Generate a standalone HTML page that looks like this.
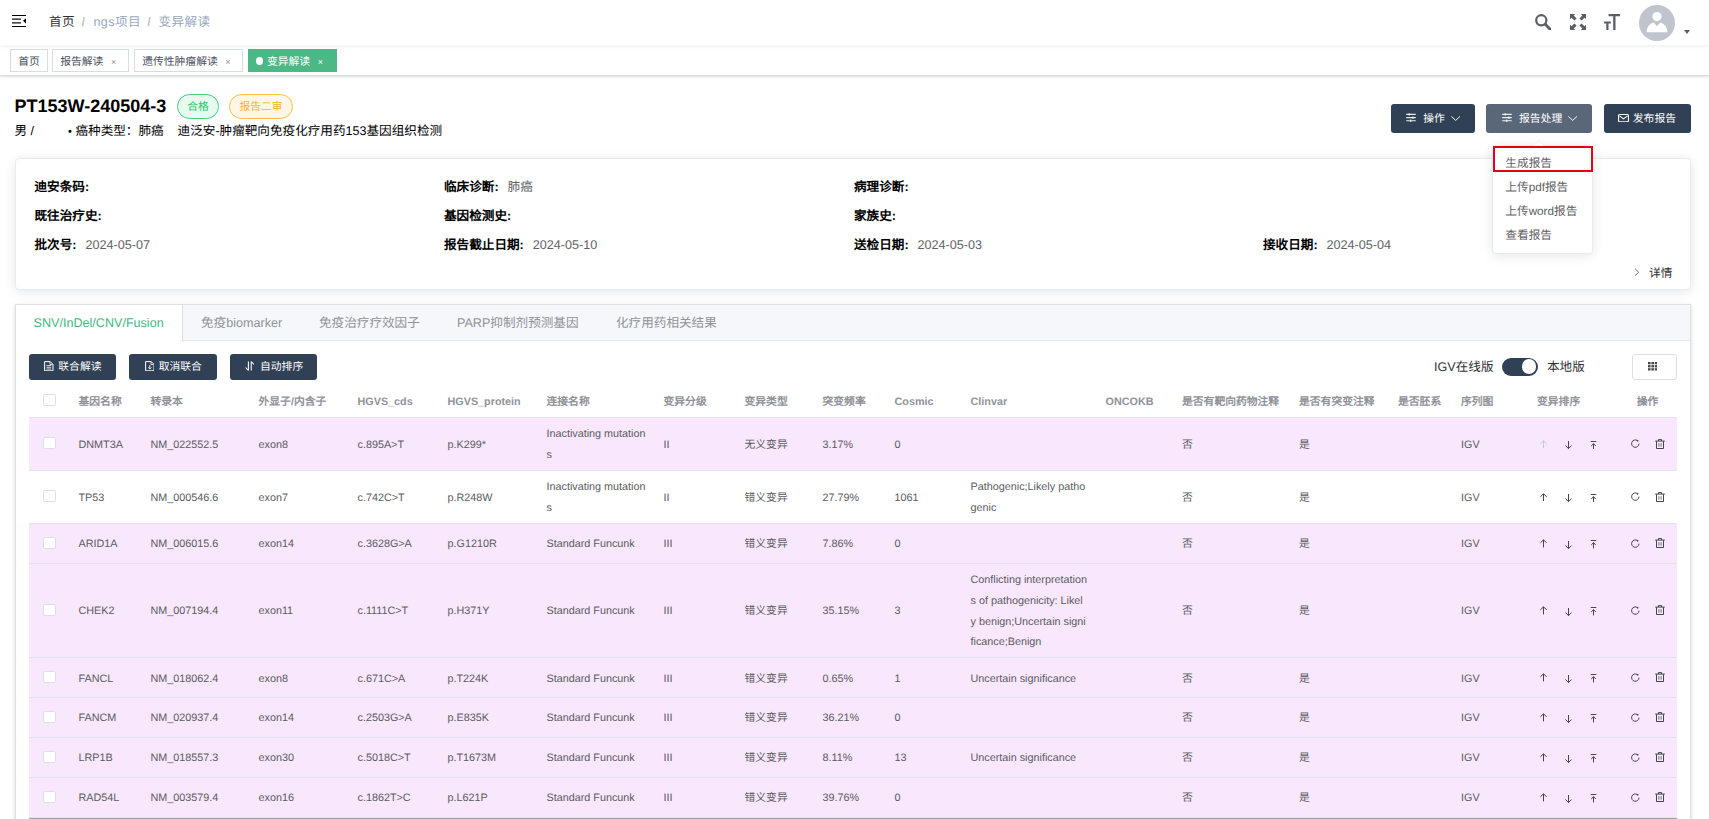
<!DOCTYPE html>
<html lang="zh-CN">
<head>
<meta charset="utf-8">
<title>变异解读</title>
<style>
*{box-sizing:border-box}
html,body{margin:0;padding:0}
body{width:1709px;height:819px;overflow:hidden;background:#fff;position:relative;
 font-family:"Liberation Sans",sans-serif;font-size:12.6px;color:#303133;text-rendering:geometricPrecision}
svg{display:block}
/* ---------- navbar ---------- */
.navbar{position:absolute;left:0;top:0;width:1709px;height:45px;background:#fff;box-shadow:0 1px 4px rgba(0,21,41,.08);z-index:5}
.hamb{position:absolute;left:12px;top:14px;width:14px;height:14px}
.crumb{position:absolute;left:49px;top:0;height:44px;line-height:44.200px;font-size:12.6px;white-space:nowrap;color:#97a8be}
.crumb b{font-weight:400;color:#303133}
.crumb i{font-style:normal;color:#c0c4cc;font-weight:700}
.crumb b,.crumb i,.crumb span{position:absolute;top:0;letter-spacing:.4px}
.nico{position:absolute;top:14px;width:16px;height:16px;color:#5a5e66}
.avatar{position:absolute;left:1639px;top:5px;width:36px;height:36px;border-radius:50%;background:#c0c4cc;overflow:hidden}
.caret{position:absolute;left:1684px;top:30.300px;width:0;height:0;border-left:3.800px solid transparent;border-right:3.800px solid transparent;border-top:4.800px solid #5a5e66}
/* ---------- tags view ---------- */
.tags{position:absolute;left:0;top:45px;width:1709px;height:30.6px;background:#fff;border-bottom:1px solid #d8dce5;box-shadow:0 1px 3px 0 rgba(0,0,0,.12),0 0 3px 0 rgba(0,0,0,.04)}
.tag{position:absolute;top:3.6px;height:23.4px;line-height:25.400px;border:1px solid #d8dce5;background:#fff;color:#495060;font-size:10.8px;padding:0 7.2px;white-space:nowrap}
.tag .x{display:inline-block;margin-left:7.500px;font-size:9px;color:#8d939e;transform:translateY(-0.100px)}
.tag.on{background:#4bb886;border-color:#4bb886;color:#fff}
.tag.on .x{color:#fff}
.tag.on:before{content:"";display:inline-block;width:7.2px;height:7.600px;border-radius:50%;background:#fff;margin-right:3.6px;position:relative;top:0.300px}
/* ---------- title ---------- */
.ttl{position:absolute;left:14.5px;top:94px;height:24px;line-height:24px;font-size:18px;font-weight:700;color:#000;white-space:nowrap}
.pill{position:absolute;top:93.5px;height:25.2px;line-height:25px;border-radius:13px;border:1px solid;font-size:10.8px;padding:0;text-align:center;white-space:nowrap}
.pill.g{left:177px;width:42px;color:#22c96c;background:#e8f9ef;border-color:#3dd280}
.pill.o{left:229px;width:64px;color:#f9b52a;background:#fff7e6;border-color:#fbbf45}
.sub{position:absolute;left:14.5px;top:121px;height:20px;line-height:20px;font-size:12.6px;color:#000;white-space:pre}
.btn{position:absolute;background:#304156;color:#fff;border-radius:3px;font-size:10.8px;font-weight:500;white-space:nowrap}
.btn .a{position:absolute}
.btn span.a{top:0;height:100%;display:flex;align-items:center}
/* ---------- dropdown ---------- */
.dd{position:absolute;left:1491.500px;top:144.700px;width:101.800px;height:109px;background:#fff;border:1px solid #e6ebf5;border-radius:4px;box-shadow:0 2px 12px 0 rgba(0,0,0,.1);z-index:20}
.dd div{position:absolute;left:12.800px;font-size:11.7px;color:#606266;height:24.3px;line-height:24.3px;white-space:nowrap}
.ddarrow{position:absolute;left:1533.800px;top:140.600px;width:0;height:0;border-left:5px solid transparent;border-right:5px solid transparent;border-bottom:5px solid #fff;z-index:21;filter:drop-shadow(0 -1px 0 #e6ebf5)}
.redbox{position:absolute;left:1493px;top:146px;width:100px;height:25.5px;border:2px solid #e60012;z-index:22}
/* ---------- info card ---------- */
.card{position:absolute;left:15px;top:158px;width:1676px;height:132px;background:#fff;border:1px solid #e6ebf5;border-radius:4px;box-shadow:0 2px 12px 0 rgba(0,0,0,.1)}
.f{position:absolute;height:28.8px;line-height:28.8px;white-space:nowrap;font-size:12.6px;color:#606266}
.f b{color:#000;font-weight:700;margin-right:9px}
/* ---------- tab card ---------- */
.tcard{position:absolute;left:15px;top:304px;width:1676px;height:560px;background:#fff;border:1px solid #dcdfe6;box-shadow:0 2px 4px 0 rgba(0,0,0,.12),0 0 6px 0 rgba(0,0,0,.04)}
.thead{position:absolute;left:0;top:0;width:1674px;height:36px;background:#f5f7fa;border-bottom:1px solid #e4e7ed}
.tb{position:absolute;top:0;height:36px;line-height:37px;font-size:12.6px;color:#909399;white-space:nowrap}
.tb.on{left:0;top:0;width:167px;height:37px;line-height:37px;background:#fff;color:#42b983;border-right:1px solid #dcdfe6;text-align:left;padding-left:17.500px}
.sw{position:absolute;left:1502px;top:357.5px;width:36px;height:18px;border-radius:9px;background:#304156}
.sw:after{content:"";position:absolute;right:1.8px;top:1.8px;width:14.4px;height:14.4px;border-radius:50%;background:#fff}
.lbl{position:absolute;height:18px;line-height:18px;font-size:12.6px;color:#303133;white-space:nowrap}
.gbtn{position:absolute;left:1632px;top:354px;width:45px;height:26px;border:1px solid #dcdfe6;border-radius:3px;background:#fff}
/* ---------- table ---------- */
table{position:absolute;left:29px;top:385px;width:1648px;border-collapse:separate;border-spacing:0;table-layout:fixed;font-size:10.8px;color:#5a5c61}
th,td{padding:0 9px;text-align:left;vertical-align:middle;white-space:nowrap;overflow:visible;border-bottom:1px solid #dfe4ed;line-height:20.7px;font-weight:400}
th{height:33px;color:#909399;font-weight:700;border-bottom:1px solid #dfe4ed;padding-top:2.200px}
th .cb{position:relative;top:-2px}
th.ctr{text-align:center}
td{padding-top:1px}
tr.pink td{background:#f9e7fd}
td .cb{position:relative;top:-1.500px}
th.sel,td.sel{padding-left:13.800px;padding-right:0}
.cb{display:block;width:13px;height:12px;border:1px solid #dcdfe6;border-radius:2px;background:#fff}
.ic{width:10.8px;height:10.8px}
td.srt,td.ops{padding:0}
.dn{position:relative;top:1px}
.w{position:relative;height:20.700px}
.ab,.ab2{position:absolute;color:#3a3c42}
.ab.dis{color:#c3c6d8}
</style>
</head>
<body>

<!-- NAVBAR -->
<div class="navbar">
  <svg class="hamb" viewBox="0 0 14 14"><path d="M0 1.500h14M0 12.500h14" stroke="#000" stroke-width="1.200" fill="none"/><path d="M0 5.100h9M0 8.800h9" stroke="#111" stroke-width="1.300" fill="none"/><path d="M14 4.200v5.300L11 6.850z" fill="#000"/></svg>
  <div class="crumb"><b style="left:0">首页</b><i style="left:32.600px">/</i><span style="left:44.400px">ngs项目</span><i style="left:98.200px">/</i><span style="left:109.500px">变异解读</span></div>
  <svg class="nico" style="left:1535px" viewBox="0 0 16 16"><circle cx="6.300" cy="6.300" r="5.100" fill="none" stroke="currentColor" stroke-width="2.200"/><path d="M10.300 10.300L14.900 14.900" stroke="currentColor" stroke-width="2.800" stroke-linecap="round"/></svg>
  <svg class="nico" style="left:1570px" viewBox="0 0 16 16"><g fill="currentColor"><path d="M0 0h5.200L3.700 1.500l2.900 2.900-2.200 2.200-2.900-2.900L0 5.200z"/><path d="M16 0v5.200l-1.500-1.500-2.900 2.900-2.200-2.200 2.900-2.900L10.800 0z"/><path d="M0 16v-5.200l1.500 1.500 2.900-2.900 2.200 2.200-2.900 2.900L5.200 16z"/><path d="M16 16h-5.200l1.500-1.500-2.900-2.900 2.200-2.200 2.900 2.900 1.500-1.500z"/></g></svg>
  <svg class="nico" style="left:1604px" viewBox="0 0 16 16"><g fill="currentColor"><path d="M4.6 0H16v2.2h-4.5V16H9.2V2.2H4.6z"/><path d="M0 7.6h6.8v2H4.5V16H2.3V9.6H0z"/></g></svg>
  <div class="avatar"><svg viewBox="0 0 36 36" width="36" height="36"><circle cx="18" cy="11.6" r="4.6" fill="#fff"/><path d="M7.6 27.2c0-5 3.2-8.6 7.2-9.6l3.2 3.6 3.2-3.6c4 1 7.2 4.600 7.200 9.600z" fill="#fff"/></svg></div>
  <div class="caret"></div>
</div>

<!-- TAGS -->
<div class="tags">
  <div class="tag" style="left:10px;width:38px">首页</div>
  <div class="tag" style="left:52px;width:77px">报告解读<span class="x">×</span></div>
  <div class="tag" style="left:134px;width:109px">遗传性肿瘤解读<span class="x">×</span></div>
  <div class="tag on" style="left:248px;width:89px">变异解读<span class="x">×</span></div>
</div>

<!-- TITLE -->
<div class="ttl">PT153W-240504-3</div>
<div class="pill g">合格</div>
<div class="pill o">报告二审</div>
<div class="sub">男 /        <span style="font-size:11px;position:relative;top:-0.500px;margin-left:6px">•</span> 癌种类型：肺癌    迪泛安-肿瘤靶向免疫化疗用药153基因组织检测</div>

<div class="btn" style="left:1391px;top:104px;width:84px;height:28.8px"><svg class="a" style="left:14.800px;top:9.300px" width="10" height="9.400" viewBox="0 0 10 9.400"><path d="M.2 1.400h9.600M.2 4.600h9.600M.2 7.800h9.600" stroke="#fff" stroke-width="1.150" opacity=".88"/><path d="M3.300.2v2.400M6.900 3.400v2.400M4.600 6.600v2.400" stroke="#fff" stroke-width="1.500" opacity=".7"/></svg><span class="a" style="left:32.200px">操作</span><svg class="a" style="left:60px;top:11.800px" width="9.400" height="5.400" viewBox="0 0 9.400 5.400"><path d="M.4.400L4.700 4.400 9 .4" stroke="#fff" stroke-width=".95" fill="none"/></svg></div>
<div class="btn" style="left:1486px;top:104px;width:106px;height:28.8px;background:#596778"><svg class="a" style="left:15.600px;top:9.300px" width="10" height="9.400" viewBox="0 0 10 9.400"><path d="M.2 1.400h9.600M.2 4.600h9.600M.2 7.800h9.600" stroke="#fff" stroke-width="1.150" opacity=".88"/><path d="M3.300.2v2.400M6.900 3.400v2.400M4.600 6.600v2.400" stroke="#fff" stroke-width="1.500" opacity=".7"/></svg><span class="a" style="left:33px">报告处理</span><svg class="a" style="left:82.300px;top:11.800px" width="9.400" height="5.400" viewBox="0 0 9.400 5.400"><path d="M.4.400L4.700 4.400 9 .4" stroke="#fff" stroke-width=".95" fill="none"/></svg></div>
<div class="btn" style="left:1604px;top:104px;width:87px;height:28.8px"><svg class="a" style="left:14px;top:9.800px" width="11" height="8.400" viewBox="0 0 11 8.400"><rect x=".55" y=".55" width="9.900" height="7.300" rx="1" fill="none" stroke="#fff" stroke-width="1.100"/><path d="M1.500 1.900l4 3 4-3" fill="none" stroke="#fff" stroke-width="1.100"/></svg><span class="a" style="left:28.800px">发布报告</span></div>

<!-- INFO CARD -->
<div class="card">
  <div class="f" style="left:18.5px;top:14px"><b>迪安条码:</b></div>
  <div class="f" style="left:18.5px;top:43px"><b>既往治疗史:</b></div>
  <div class="f" style="left:18.5px;top:71.800px"><b>批次号:</b>2024-05-07</div>
  <div class="f" style="left:428px;top:14px"><b>临床诊断:</b>肺癌</div>
  <div class="f" style="left:428px;top:43px"><b>基因检测史:</b></div>
  <div class="f" style="left:428px;top:71.800px"><b>报告截止日期:</b>2024-05-10</div>
  <div class="f" style="left:838px;top:14px"><b>病理诊断:</b></div>
  <div class="f" style="left:838px;top:43px"><b>家族史:</b></div>
  <div class="f" style="left:838px;top:71.800px"><b>送检日期:</b>2024-05-03</div>
  <div class="f" style="left:1247px;top:71.800px"><b>接收日期:</b>2024-05-04</div>
  <svg style="position:absolute;left:1618px;top:109px" width="6" height="8.400" viewBox="0 0 6 8.400"><path d="M.8.500L4.700 4.200.8 7.900" fill="none" stroke="#6b7280" stroke-width="1"/></svg>
  <div class="f" style="left:1633px;top:101px;color:#303133;font-size:11.7px">详情</div>
</div>

<!-- DROPDOWN -->
<div class="ddarrow"></div>
<div class="dd">
  <div style="top:6px">生成报告</div>
  <div style="top:30.800px">上传pdf报告</div>
  <div style="top:54.700px">上传word报告</div>
  <div style="top:78.400px">查看报告</div>
</div>
<div class="redbox"></div>

<!-- TAB CARD -->
<div class="tcard">
  <div class="thead">
    <div class="tb on">SNV/InDel/CNV/Fusion</div>
    <div class="tb" style="left:185px">免疫biomarker</div>
    <div class="tb" style="left:303px">免疫治疗疗效因子</div>
    <div class="tb" style="left:441px">PARP抑制剂预测基因</div>
    <div class="tb" style="left:600px">化疗用药相关结果</div>
  </div>
</div>

<div class="btn" style="left:29px;top:354px;width:87px;height:26px"><svg class="a" style="left:15.200px;top:6.500px" width="9.600" height="10.400" viewBox="0 0 9.600 10.400"><path d="M.6.600h5.600l2.800 2.800v6.400H.6z" fill="none" stroke="#fff" stroke-width="1"/><path d="M6 .8v2.800h2.800" fill="none" stroke="#fff" stroke-width=".8"/><path d="M2.400 4.600h4.800M2.400 6.300h4.800M2.400 8h4.800" stroke="#fff" stroke-width=".8"/></svg><span class="a" style="top:-1px;left:29.300px">联合解读</span></div>
<div class="btn" style="left:129px;top:354px;width:88px;height:26px"><svg class="a" style="left:15.800px;top:6.500px" width="9.600" height="10.400" viewBox="0 0 9.600 10.400"><path d="M.6.600h5.600l2.800 2.800v6.400H.6z" fill="none" stroke="#fff" stroke-width="1"/><path d="M6 .8v2.800h2.800" fill="none" stroke="#fff" stroke-width=".8"/><path d="M4.800 4v3.800M3.200 6.400l1.600 1.600 1.600-1.600" stroke="#fff" stroke-width=".9" fill="none"/></svg><span class="a" style="top:-1px;left:29.700px">取消联合</span></div>
<div class="btn" style="left:230px;top:354px;width:87px;height:26px"><svg class="a" style="left:14.800px;top:6.800px" width="9.600" height="10" viewBox="0 0 9.600 10"><path d="M3.400.500v9M.6 6.500l2.800 3M6.200 9.500v-9M9 3.500l-2.800-3" stroke="#fff" stroke-width="1.050" fill="none"/></svg><span class="a" style="top:-1px;left:30px">自动排序</span></div>

<div class="lbl" style="left:1434px;top:357.5px">IGV在线版</div>
<div class="sw"></div>
<div class="lbl" style="left:1547px;top:357.5px">本地版</div>
<div class="gbtn"><svg style="position:absolute;left:15px;top:7px" width="9.400" height="8.500" viewBox="0 0 9.400 8.500"><g fill="#44464c"><rect x="0" y="0" width="2.600" height="2.300"/><rect x="3.400" y="0" width="2.600" height="2.300"/><rect x="6.800" y="0" width="2.600" height="2.300"/><rect x="0" y="3.100" width="2.600" height="2.300"/><rect x="3.400" y="3.100" width="2.600" height="2.300"/><rect x="6.800" y="3.100" width="2.600" height="2.300"/><rect x="0" y="6.200" width="2.600" height="2.300"/><rect x="3.400" y="6.200" width="2.600" height="2.300"/><rect x="6.800" y="6.200" width="2.600" height="2.300"/></g></svg></div>

<table>
<colgroup><col style="width:40.5px"><col style="width:72px"><col style="width:108px"><col style="width:99px"><col style="width:90px"><col style="width:99px"><col style="width:117px"><col style="width:81px"><col style="width:78px"><col style="width:72px"><col style="width:76px"><col style="width:135px"><col style="width:76.5px"><col style="width:117px"><col style="width:99px"><col style="width:63px"><col style="width:76px"><col style="width:90px"><col style="width:59px"></colgroup>
<thead><tr><th class="sel"><span class="cb"></span></th><th>基因名称</th><th>转录本</th><th>外显子/内含子</th><th>HGVS_cds</th><th>HGVS_protein</th><th>连接名称</th><th>变异分级</th><th>变异类型</th><th>突变频率</th><th>Cosmic</th><th>Clinvar</th><th>ONCOKB</th><th>是否有靶向药物注释</th><th>是否有突变注释</th><th>是否胚系</th><th>序列图</th><th>变异排序</th><th class=ctr>操作</th></tr></thead>
<tbody>
<tr class="pink" style="height:53px"><td class="sel"><span class="cb"></span></td><td style="padding-top:2.800px">DNMT3A</td><td style="padding-top:2.800px">NM_022552.5</td><td style="padding-top:2.800px">exon8</td><td style="padding-top:2.800px">c.895A&gt;T</td><td style="padding-top:2.800px">p.K299*</td><td>Inactivating mutation<br>s</td><td style="padding-top:2.800px">II</td><td style="padding-top:2.800px">无义变异</td><td style="padding-top:2.800px">3.17%</td><td style="padding-top:2.800px">0</td><td style="padding-top:2.800px"></td><td style="padding-top:2.800px"></td><td style="padding-top:2.800px">否</td><td style="padding-top:2.800px">是</td><td style="padding-top:2.800px"></td><td style="padding-top:2.800px">IGV</td><td class="srt"><div class="w"><span class="ab dis" style="left:12px;top:6.200px"><svg width="7" height="8.4" viewBox="0 0 7 8.4"><path d="M3.5 8.4V.8M.4 3.900L3.500.8l3.100 3.100" fill="none" stroke="currentColor" stroke-width="0.95"/></svg></span><span class="ab" style="left:37px;top:7.600px"><svg width="7" height="8.4" viewBox="0 0 7 8.4"><path d="M3.500 0v7.600M.4 4.500l3.100 3.100 3.100-3.100" fill="none" stroke="currentColor" stroke-width="0.95"/></svg></span><span class="ab" style="left:62px;top:7.300px"><svg width="7" height="8.400" viewBox="0 0 7 8.400"><path d="M.7.500h5.600M3.500 8.400V2.700M1.200 5l2.300-2.300L5.800 5" fill="none" stroke="currentColor" stroke-width="0.95"/></svg></span></div></td><td class="ops"><div class="w"><span class="ab2" style="left:12.700px;top:5.800px"><svg width="9.200" height="8.600" viewBox="0 0 9.200 8.600"><path d="M8 4.700A3.700 3.700 0 1 1 6.300 1.500" fill="none" stroke="currentColor" stroke-width="0.95"/><path d="M6 .7L7.900 1.700 6.300 2.900z" fill="currentColor"/></svg></span><span class="ab2" style="left:37px;top:4.900px"><svg width="10" height="10" viewBox="0 0 10 10"><path d="M.2 2.100h9.600M3.400 2V.6h3.200V2M1.500 2.300v7.200h7V2.300" fill="none" stroke="currentColor" stroke-width="0.95"/><path d="M3.900 4.200v3.500M6.100 4.200v3.500" fill="none" stroke="currentColor" stroke-width=".7"/></svg></span></div></td></tr>
<tr class="" style="height:53px"><td class="sel"><span class="cb"></span></td><td style="padding-top:2.800px">TP53</td><td style="padding-top:2.800px">NM_000546.6</td><td style="padding-top:2.800px">exon7</td><td style="padding-top:2.800px">c.742C&gt;T</td><td style="padding-top:2.800px">p.R248W</td><td>Inactivating mutation<br>s</td><td style="padding-top:2.800px">II</td><td style="padding-top:2.800px">错义变异</td><td style="padding-top:2.800px">27.79%</td><td style="padding-top:2.800px">1061</td><td>Pathogenic;Likely patho<br>genic</td><td style="padding-top:2.800px"></td><td style="padding-top:2.800px">否</td><td style="padding-top:2.800px">是</td><td style="padding-top:2.800px"></td><td style="padding-top:2.800px">IGV</td><td class="srt"><div class="w"><span class="ab" style="left:12px;top:6.200px"><svg width="7" height="8.4" viewBox="0 0 7 8.4"><path d="M3.5 8.4V.8M.4 3.900L3.500.8l3.100 3.100" fill="none" stroke="currentColor" stroke-width="0.95"/></svg></span><span class="ab" style="left:37px;top:7.600px"><svg width="7" height="8.4" viewBox="0 0 7 8.4"><path d="M3.500 0v7.600M.4 4.500l3.100 3.100 3.100-3.100" fill="none" stroke="currentColor" stroke-width="0.95"/></svg></span><span class="ab" style="left:62px;top:7.300px"><svg width="7" height="8.400" viewBox="0 0 7 8.400"><path d="M.7.500h5.600M3.500 8.400V2.700M1.200 5l2.300-2.300L5.800 5" fill="none" stroke="currentColor" stroke-width="0.95"/></svg></span></div></td><td class="ops"><div class="w"><span class="ab2" style="left:12.700px;top:5.800px"><svg width="9.200" height="8.600" viewBox="0 0 9.200 8.600"><path d="M8 4.700A3.700 3.700 0 1 1 6.300 1.500" fill="none" stroke="currentColor" stroke-width="0.95"/><path d="M6 .7L7.900 1.700 6.300 2.900z" fill="currentColor"/></svg></span><span class="ab2" style="left:37px;top:4.900px"><svg width="10" height="10" viewBox="0 0 10 10"><path d="M.2 2.100h9.600M3.400 2V.6h3.200V2M1.500 2.300v7.200h7V2.300" fill="none" stroke="currentColor" stroke-width="0.95"/><path d="M3.900 4.200v3.500M6.100 4.200v3.500" fill="none" stroke="currentColor" stroke-width=".7"/></svg></span></div></td></tr>
<tr class="pink" style="height:40px"><td class="sel"><span class="cb"></span></td><td>ARID1A</td><td>NM_006015.6</td><td>exon14</td><td>c.3628G&gt;A</td><td>p.G1210R</td><td>Standard Funcunk</td><td>III</td><td>错义变异</td><td>7.86%</td><td>0</td><td></td><td></td><td>否</td><td>是</td><td></td><td>IGV</td><td class="srt"><div class="w"><span class="ab" style="left:12px;top:6.200px"><svg width="7" height="8.4" viewBox="0 0 7 8.4"><path d="M3.5 8.4V.8M.4 3.900L3.500.8l3.100 3.100" fill="none" stroke="currentColor" stroke-width="0.95"/></svg></span><span class="ab" style="left:37px;top:7.600px"><svg width="7" height="8.4" viewBox="0 0 7 8.4"><path d="M3.500 0v7.600M.4 4.500l3.100 3.100 3.100-3.100" fill="none" stroke="currentColor" stroke-width="0.95"/></svg></span><span class="ab" style="left:62px;top:7.300px"><svg width="7" height="8.400" viewBox="0 0 7 8.400"><path d="M.7.500h5.600M3.500 8.400V2.700M1.200 5l2.300-2.300L5.800 5" fill="none" stroke="currentColor" stroke-width="0.95"/></svg></span></div></td><td class="ops"><div class="w"><span class="ab2" style="left:12.700px;top:5.800px"><svg width="9.200" height="8.600" viewBox="0 0 9.200 8.600"><path d="M8 4.700A3.700 3.700 0 1 1 6.300 1.500" fill="none" stroke="currentColor" stroke-width="0.95"/><path d="M6 .7L7.900 1.700 6.300 2.900z" fill="currentColor"/></svg></span><span class="ab2" style="left:37px;top:4.900px"><svg width="10" height="10" viewBox="0 0 10 10"><path d="M.2 2.100h9.600M3.400 2V.6h3.200V2M1.500 2.300v7.200h7V2.300" fill="none" stroke="currentColor" stroke-width="0.95"/><path d="M3.900 4.200v3.500M6.100 4.200v3.500" fill="none" stroke="currentColor" stroke-width=".7"/></svg></span></div></td></tr>
<tr class="pink" style="height:94px"><td class="sel"><span class="cb"></span></td><td>CHEK2</td><td>NM_007194.4</td><td>exon11</td><td>c.1111C&gt;T</td><td>p.H371Y</td><td>Standard Funcunk</td><td>III</td><td>错义变异</td><td>35.15%</td><td>3</td><td>Conflicting interpretation<br><span class=dn>s of pathogenicity: Likel</span><br><span class=dn>y benign;Uncertain signi</span><br>ficance;Benign</td><td></td><td>否</td><td>是</td><td></td><td>IGV</td><td class="srt"><div class="w"><span class="ab" style="left:12px;top:6.200px"><svg width="7" height="8.4" viewBox="0 0 7 8.4"><path d="M3.5 8.4V.8M.4 3.900L3.500.8l3.100 3.100" fill="none" stroke="currentColor" stroke-width="0.95"/></svg></span><span class="ab" style="left:37px;top:7.600px"><svg width="7" height="8.4" viewBox="0 0 7 8.4"><path d="M3.500 0v7.600M.4 4.500l3.100 3.100 3.100-3.100" fill="none" stroke="currentColor" stroke-width="0.95"/></svg></span><span class="ab" style="left:62px;top:7.300px"><svg width="7" height="8.400" viewBox="0 0 7 8.400"><path d="M.7.500h5.600M3.500 8.400V2.700M1.200 5l2.300-2.300L5.800 5" fill="none" stroke="currentColor" stroke-width="0.95"/></svg></span></div></td><td class="ops"><div class="w"><span class="ab2" style="left:12.700px;top:5.800px"><svg width="9.200" height="8.600" viewBox="0 0 9.200 8.600"><path d="M8 4.700A3.700 3.700 0 1 1 6.300 1.500" fill="none" stroke="currentColor" stroke-width="0.95"/><path d="M6 .7L7.900 1.700 6.300 2.900z" fill="currentColor"/></svg></span><span class="ab2" style="left:37px;top:4.900px"><svg width="10" height="10" viewBox="0 0 10 10"><path d="M.2 2.100h9.600M3.400 2V.6h3.200V2M1.500 2.300v7.200h7V2.300" fill="none" stroke="currentColor" stroke-width="0.95"/><path d="M3.900 4.200v3.500M6.100 4.200v3.500" fill="none" stroke="currentColor" stroke-width=".7"/></svg></span></div></td></tr>
<tr class="pink" style="height:40px"><td class="sel"><span class="cb" style="top:-0.700px"></span></td><td style="padding-top:3.400px">FANCL</td><td style="padding-top:3.400px">NM_018062.4</td><td style="padding-top:3.400px">exon8</td><td style="padding-top:3.400px">c.671C&gt;A</td><td style="padding-top:3.400px">p.T224K</td><td style="padding-top:3.400px">Standard Funcunk</td><td style="padding-top:3.400px">III</td><td style="padding-top:3.400px">错义变异</td><td style="padding-top:3.400px">0.65%</td><td style="padding-top:3.400px">1</td><td style="padding-top:3.400px">Uncertain significance</td><td style="padding-top:3.400px"></td><td style="padding-top:3.400px">否</td><td style="padding-top:3.400px">是</td><td style="padding-top:3.400px"></td><td style="padding-top:3.400px">IGV</td><td class="srt"><div class="w"><span class="ab" style="left:12px;top:6.200px"><svg width="7" height="8.4" viewBox="0 0 7 8.4"><path d="M3.5 8.4V.8M.4 3.900L3.500.8l3.100 3.100" fill="none" stroke="currentColor" stroke-width="0.95"/></svg></span><span class="ab" style="left:37px;top:7.600px"><svg width="7" height="8.4" viewBox="0 0 7 8.4"><path d="M3.500 0v7.600M.4 4.500l3.100 3.100 3.100-3.100" fill="none" stroke="currentColor" stroke-width="0.95"/></svg></span><span class="ab" style="left:62px;top:7.300px"><svg width="7" height="8.400" viewBox="0 0 7 8.400"><path d="M.7.500h5.600M3.500 8.400V2.700M1.200 5l2.300-2.300L5.800 5" fill="none" stroke="currentColor" stroke-width="0.95"/></svg></span></div></td><td class="ops"><div class="w"><span class="ab2" style="left:12.700px;top:5.800px"><svg width="9.200" height="8.600" viewBox="0 0 9.200 8.600"><path d="M8 4.700A3.700 3.700 0 1 1 6.300 1.500" fill="none" stroke="currentColor" stroke-width="0.95"/><path d="M6 .7L7.900 1.700 6.300 2.900z" fill="currentColor"/></svg></span><span class="ab2" style="left:37px;top:4.900px"><svg width="10" height="10" viewBox="0 0 10 10"><path d="M.2 2.100h9.600M3.400 2V.6h3.200V2M1.500 2.300v7.200h7V2.300" fill="none" stroke="currentColor" stroke-width="0.95"/><path d="M3.900 4.200v3.500M6.100 4.200v3.500" fill="none" stroke="currentColor" stroke-width=".7"/></svg></span></div></td></tr>
<tr class="pink" style="height:40px"><td class="sel"><span class="cb"></span></td><td>FANCM</td><td>NM_020937.4</td><td>exon14</td><td>c.2503G&gt;A</td><td>p.E835K</td><td>Standard Funcunk</td><td>III</td><td>错义变异</td><td>36.21%</td><td>0</td><td></td><td></td><td>否</td><td>是</td><td></td><td>IGV</td><td class="srt"><div class="w"><span class="ab" style="left:12px;top:6.200px"><svg width="7" height="8.4" viewBox="0 0 7 8.4"><path d="M3.5 8.4V.8M.4 3.900L3.500.8l3.100 3.100" fill="none" stroke="currentColor" stroke-width="0.95"/></svg></span><span class="ab" style="left:37px;top:7.600px"><svg width="7" height="8.4" viewBox="0 0 7 8.4"><path d="M3.500 0v7.600M.4 4.500l3.100 3.100 3.100-3.100" fill="none" stroke="currentColor" stroke-width="0.95"/></svg></span><span class="ab" style="left:62px;top:7.300px"><svg width="7" height="8.400" viewBox="0 0 7 8.400"><path d="M.7.500h5.600M3.500 8.400V2.700M1.200 5l2.300-2.300L5.800 5" fill="none" stroke="currentColor" stroke-width="0.95"/></svg></span></div></td><td class="ops"><div class="w"><span class="ab2" style="left:12.700px;top:5.800px"><svg width="9.200" height="8.600" viewBox="0 0 9.200 8.600"><path d="M8 4.700A3.700 3.700 0 1 1 6.300 1.500" fill="none" stroke="currentColor" stroke-width="0.95"/><path d="M6 .7L7.900 1.700 6.300 2.900z" fill="currentColor"/></svg></span><span class="ab2" style="left:37px;top:4.900px"><svg width="10" height="10" viewBox="0 0 10 10"><path d="M.2 2.100h9.600M3.400 2V.6h3.200V2M1.500 2.300v7.200h7V2.300" fill="none" stroke="currentColor" stroke-width="0.95"/><path d="M3.900 4.200v3.500M6.100 4.200v3.500" fill="none" stroke="currentColor" stroke-width=".7"/></svg></span></div></td></tr>
<tr class="pink" style="height:40px"><td class="sel"><span class="cb"></span></td><td>LRP1B</td><td>NM_018557.3</td><td>exon30</td><td>c.5018C&gt;T</td><td>p.T1673M</td><td>Standard Funcunk</td><td>III</td><td>错义变异</td><td>8.11%</td><td>13</td><td>Uncertain significance</td><td></td><td>否</td><td>是</td><td></td><td>IGV</td><td class="srt"><div class="w"><span class="ab" style="left:12px;top:6.200px"><svg width="7" height="8.4" viewBox="0 0 7 8.4"><path d="M3.5 8.4V.8M.4 3.900L3.500.8l3.100 3.100" fill="none" stroke="currentColor" stroke-width="0.95"/></svg></span><span class="ab" style="left:37px;top:7.600px"><svg width="7" height="8.4" viewBox="0 0 7 8.4"><path d="M3.500 0v7.600M.4 4.500l3.100 3.100 3.100-3.100" fill="none" stroke="currentColor" stroke-width="0.95"/></svg></span><span class="ab" style="left:62px;top:7.300px"><svg width="7" height="8.400" viewBox="0 0 7 8.400"><path d="M.7.500h5.600M3.500 8.400V2.700M1.200 5l2.300-2.300L5.800 5" fill="none" stroke="currentColor" stroke-width="0.95"/></svg></span></div></td><td class="ops"><div class="w"><span class="ab2" style="left:12.700px;top:5.800px"><svg width="9.200" height="8.600" viewBox="0 0 9.200 8.600"><path d="M8 4.700A3.700 3.700 0 1 1 6.300 1.500" fill="none" stroke="currentColor" stroke-width="0.95"/><path d="M6 .7L7.900 1.700 6.300 2.900z" fill="currentColor"/></svg></span><span class="ab2" style="left:37px;top:4.900px"><svg width="10" height="10" viewBox="0 0 10 10"><path d="M.2 2.100h9.600M3.400 2V.6h3.200V2M1.500 2.300v7.200h7V2.300" fill="none" stroke="currentColor" stroke-width="0.95"/><path d="M3.900 4.200v3.500M6.100 4.200v3.500" fill="none" stroke="currentColor" stroke-width=".7"/></svg></span></div></td></tr>
<tr class="pink" style="height:40px"><td class="sel"><span class="cb"></span></td><td>RAD54L</td><td>NM_003579.4</td><td>exon16</td><td>c.1862T&gt;C</td><td>p.L621P</td><td>Standard Funcunk</td><td>III</td><td>错义变异</td><td>39.76%</td><td>0</td><td></td><td></td><td>否</td><td>是</td><td></td><td>IGV</td><td class="srt"><div class="w"><span class="ab" style="left:12px;top:6.200px"><svg width="7" height="8.4" viewBox="0 0 7 8.4"><path d="M3.5 8.4V.8M.4 3.900L3.500.8l3.100 3.100" fill="none" stroke="currentColor" stroke-width="0.95"/></svg></span><span class="ab" style="left:37px;top:7.600px"><svg width="7" height="8.4" viewBox="0 0 7 8.4"><path d="M3.500 0v7.600M.4 4.500l3.100 3.100 3.100-3.100" fill="none" stroke="currentColor" stroke-width="0.95"/></svg></span><span class="ab" style="left:62px;top:7.300px"><svg width="7" height="8.400" viewBox="0 0 7 8.400"><path d="M.7.500h5.600M3.500 8.400V2.700M1.200 5l2.300-2.300L5.800 5" fill="none" stroke="currentColor" stroke-width="0.95"/></svg></span></div></td><td class="ops"><div class="w"><span class="ab2" style="left:12.700px;top:5.800px"><svg width="9.200" height="8.600" viewBox="0 0 9.200 8.600"><path d="M8 4.700A3.700 3.700 0 1 1 6.300 1.500" fill="none" stroke="currentColor" stroke-width="0.95"/><path d="M6 .7L7.900 1.700 6.300 2.900z" fill="currentColor"/></svg></span><span class="ab2" style="left:37px;top:4.900px"><svg width="10" height="10" viewBox="0 0 10 10"><path d="M.2 2.100h9.600M3.400 2V.6h3.200V2M1.500 2.300v7.200h7V2.300" fill="none" stroke="currentColor" stroke-width="0.95"/><path d="M3.900 4.200v3.500M6.100 4.200v3.500" fill="none" stroke="currentColor" stroke-width=".7"/></svg></span></div></td></tr>

</tbody>
</table>
<div style="position:absolute;left:29px;top:818px;width:1648px;height:1px;background:#a1a1a1"></div>

</body>
</html>
